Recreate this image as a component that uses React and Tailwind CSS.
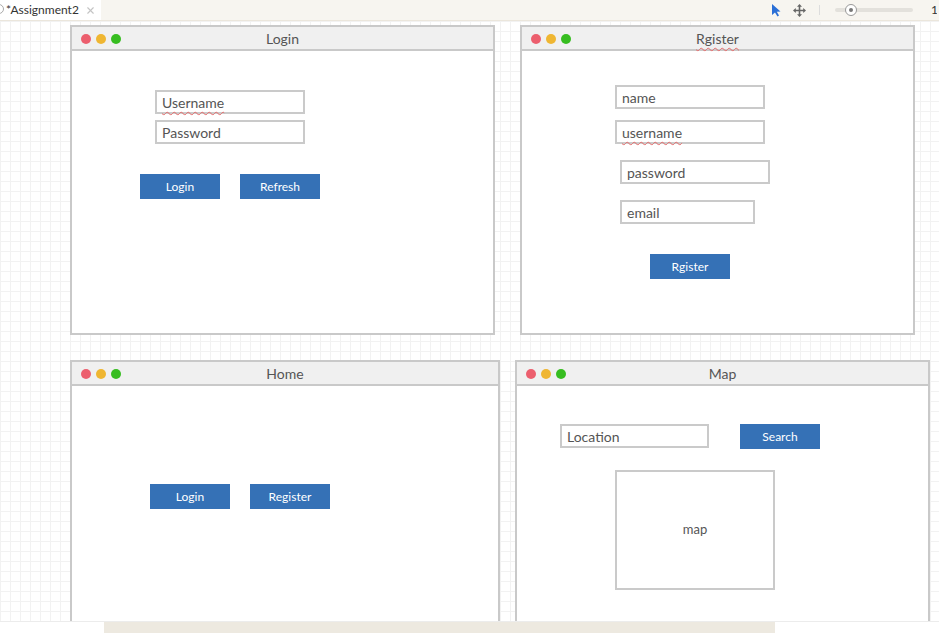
import { X } from "lucide-react";

const font = { fontFamily: "Lato, 'Open Sans', sans-serif" };
const squiggle =
  "underline decoration-wavy decoration-[#e46a6a] decoration-1 underline-offset-[3px]";

function Dots() {
  return (
    <div className="absolute left-[9px] top-[7px] flex gap-[5px]">
      <span className="w-[10px] h-[10px] rounded-full bg-[#ec5f6e]" />
      <span className="w-[10px] h-[10px] rounded-full bg-[#efb632]" />
      <span className="w-[10px] h-[10px] rounded-full bg-[#37bd20]" />
    </div>
  );
}

// mock window placed on the free canvas
function Window({ title, wavy, className, children }) {
  return (
    <div className={`absolute border-2 border-[#c9c9c9] bg-white flex flex-col ${className}`}>
      <div className="relative h-[24px] shrink-0 bg-[#f0f0f0] border-b-2 border-[#c9c9c9] flex items-center justify-center">
        <Dots />
        <span className={`text-[14px] text-[#555] ${wavy ? squiggle : ""}`}>{title}</span>
      </div>
      <div className="flex-1 flex flex-col">{children}</div>
    </div>
  );
}

function Field({ label, wavy, className = "w-[150px]" }) {
  return (
    <div
      className={`h-[24px] shrink-0 border-2 border-[#cacaca] bg-white flex items-center pl-[5px] text-[14px] text-[#555] ${className}`}
    >
      <span className={wavy ? squiggle : ""}>{label}</span>
    </div>
  );
}

function Btn({ label }) {
  return (
    <div className="w-[80px] h-[25px] shrink-0 bg-[#3571b6] text-white text-[12px] flex items-center justify-center">
      {label}
    </div>
  );
}

export default function App() {
  return (
    <div className="w-[939px] h-[633px] flex flex-col overflow-hidden bg-white" style={font}>
      {/* ── Top toolbar ── */}
      <div className="h-[21px] shrink-0 bg-[#f7f5f0] border-b border-[#ebe6dc] flex items-stretch">
        <div className="w-[101px] bg-white flex items-center relative pl-[6px] gap-[6px]">
          <span className="absolute -left-[6px] top-[4px] w-[10px] h-[10px] rounded-full border border-[#aaa]" />
          <span className="text-[12px] text-[#333]">*Assignment2</span>
          <X size={11} strokeWidth={2.5} className="text-[#c4c4c4]" />
        </div>
        <div className="flex-1" />
        <div className="flex items-center pr-[2px]">
          <svg width="12" height="14" viewBox="0 0 12 14">
            <path d="M1 1 L1 12 L4 9.5 L6.5 13.5 L8 12.5 L5.8 8.8 L9.5 8.5 Z" fill="#2a6fd6" />
          </svg>
          <svg width="13" height="13" viewBox="0 0 13 13" fill="#666" className="ml-[10px]">
            <path d="M6.5 0 L9 2.8 L7.3 2.8 L7.3 5.7 L10.2 5.7 L10.2 4 L13 6.5 L10.2 9 L10.2 7.3 L7.3 7.3 L7.3 10.2 L9 10.2 L6.5 13 L4 10.2 L5.7 10.2 L5.7 7.3 L2.8 7.3 L2.8 9 L0 6.5 L2.8 4 L2.8 5.7 L5.7 5.7 L5.7 2.8 L4 2.8 Z" />
          </svg>
          <span className="w-px h-[10px] bg-[#ddd] ml-[13px]" />
          <div className="relative w-[78px] h-[4px] bg-[#e3e1dc] rounded ml-[15px] mr-[18px]">
            <span className="absolute left-[10px] -top-[4px] w-[12px] h-[12px] rounded-full bg-white border border-[#999] flex items-center justify-center">
              <span className="w-[4px] h-[4px] rounded-full bg-[#777]" />
            </span>
          </div>
          <span className="text-[12px] text-[#333] w-[6px] overflow-hidden">100%</span>
        </div>
      </div>

      {/* ── Canvas ── */}
      <div className="relative flex-1 overflow-hidden bg-white bg-[linear-gradient(to_right,#f2f2f2_1px,transparent_1px),linear-gradient(to_bottom,#f2f2f2_1px,transparent_1px)] bg-[size:10px_10px]">
        <Window title="Login" className="left-[70px] top-[4px] w-[425px] h-[310px]">
          <div className="pt-[39px] pl-[83px] flex flex-col gap-[6px]">
            <Field label="Username" wavy />
            <Field label="Password" />
          </div>
          <div className="mt-[30px] pl-[68px] flex gap-[20px]">
            <Btn label="Login" />
            <Btn label="Refresh" />
          </div>
        </Window>

        <Window title="Rgister" wavy className="left-[520px] top-[4px] w-[395px] h-[310px]">
          <div className="pt-[34px] pl-[93px] flex flex-col">
            <Field label="name" />
            <div className="mt-[11px]">
              <Field label="username" wavy />
            </div>
            <div className="mt-[16px] ml-[5px] flex flex-col gap-[16px]">
              <Field label="password" />
              <Field label="email" className="w-[135px]" />
            </div>
            <div className="mt-[30px] ml-[35px]">
              <Btn label="Rgister" />
            </div>
          </div>
        </Window>

        <Window title="Home" className="left-[70px] top-[339px] w-[430px] h-[320px]">
          <div className="pt-[98px] pl-[78px] flex gap-[20px]">
            <Btn label="Login" />
            <Btn label="Register" />
          </div>
        </Window>

        <Window title="Map" className="left-[515px] top-[339px] w-[415px] h-[320px]">
          <div className="pt-[38px] pl-[43px] flex items-start gap-[31px]">
            <Field label="Location" className="w-[149px]" />
            <Btn label="Search" />
          </div>
          <div className="mt-[21px] ml-[98px] w-[160px] h-[120px] border-2 border-[#cacaca] bg-white flex items-center justify-center text-[13px] text-[#555]">
            map
          </div>
        </Window>
      </div>

      {/* ── Horizontal scrollbar ── */}
      <div className="h-[12px] shrink-0 bg-white border-t border-[#ececec] flex items-stretch">
        <div className="ml-[104px] w-[671px] bg-[#ede9e0]" />
      </div>
    </div>
  );
}
